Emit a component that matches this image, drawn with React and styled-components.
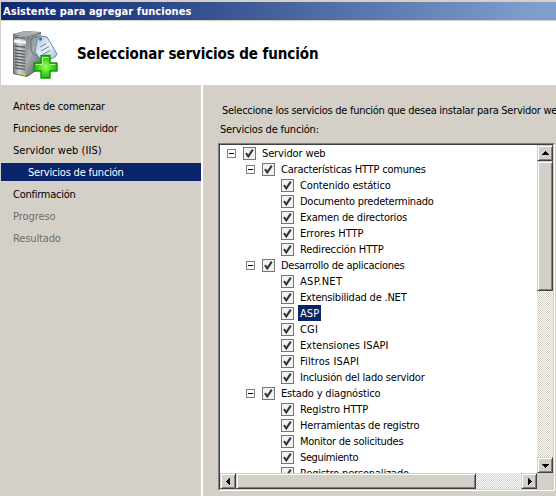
import React from "react";
import styled, { createGlobalStyle } from "styled-components";

const GlobalStyle = createGlobalStyle`
  * { box-sizing: border-box; }
  html, body { margin: 0; background: #d4d0c8; overflow: hidden; }
  body { font-family: "DejaVu Sans Condensed", "DejaVu Sans", sans-serif; font-stretch: condensed; font-size: 11px; color: #000; }
`;

const Window = styled.div`
  width: 556px;
  height: 496px;
  display: flex;
  flex-direction: column;
  overflow: hidden;
  padding: 2px 0 0 1px;
  background: #d4d0c8;
`;

const TitleBar = styled.div`
  flex: none;
  height: 18px;
  padding-left: 2px;
  line-height: 20px;
  color: #fff;
  font-weight: bold;
  white-space: nowrap;
  letter-spacing: ${(p) => p.$track}px;
  background: linear-gradient(90deg, #0c2870 0%, #3a5592 40%, #7e9ecd 96%);
`;

const Header = styled.header`
  flex: none;
  height: 64px;
  margin-top: 1px;
  display: flex;
  align-items: center;
  background: #fff;
`;

const HeaderIcon = styled.svg`
  flex: none;
  width: 48px;
  height: 50px;
  margin: 1px 17px 0 11px;
`;

const Title = styled.h1`
  margin: 2px 0 0;
  font-size: 15px;
  line-height: 20px;
  font-weight: bold;
  white-space: nowrap;
  letter-spacing: ${(p) => p.$track}px;
`;

const Body = styled.div`
  flex: 1;
  display: flex;
  min-height: 0;
`;

const Sidebar = styled.nav`
  flex: none;
  width: 202px;
  padding-top: 12px;
  border-right: 2px solid #fff;
  display: flex;
  flex-direction: column;
  gap: 4px;
`;

const Step = styled.div`
  height: 18px;
  line-height: 20px;
  white-space: nowrap;
  padding-left: ${(p) => (p.$sub ? 27 : 12)}px;
  color: ${(p) => (p.$active ? "#fff" : p.$muted ? "#706e69" : "#000")};
  background: ${(p) => (p.$active ? "#0a246a" : "transparent")};
  letter-spacing: ${(p) => p.$track}px;
`;

const Content = styled.main`
  flex: 1;
  min-width: 0;
  padding: 17px 0 0 15px;
  overflow: hidden;
`;

const Label = styled.div`
  height: 19px;
  line-height: 18px;
  white-space: nowrap;
  padding-left: ${(p) => p.$indent}px;
  letter-spacing: ${(p) => p.$track}px;
`;

const ListBox = styled.div`
  width: 337px;
  height: 348px;
  margin-top: 3px;
  border: 1px solid;
  border-color: #808080 #fff #fff #808080;
`;

const ListInner = styled.div`
  width: 335px;
  height: 346px;
  border: 1px solid;
  border-color: #404040 #d4d0c8 #d4d0c8 #404040;
  display: grid;
  grid-template: 328px 16px / 317px 16px;
  background: #d4d0c8;
`;

const Tree = styled.div`
  background: #fff;
  overflow: hidden;
`;

const Row = styled.div`
  height: 16px;
  display: flex;
  align-items: center;
  padding-left: ${(p) => 7 + p.$level * 19}px;
`;

const Toggle = styled.svg`
  flex: none;
  width: 9px;
  height: 9px;
  margin-right: 7px;
  visibility: ${(p) => (p.$shown ? "visible" : "hidden")};
`;

const Check = styled.svg`
  flex: none;
  width: 13px;
  height: 13px;
  margin-right: 4px;
`;

const RowText = styled.span`
  height: 16px;
  line-height: 18px;
  padding: 0 2px;
  white-space: nowrap;
  color: ${(p) => (p.$selected ? "#fff" : "#000")};
  background: ${(p) => (p.$selected ? "#0a246a" : "transparent")};
  letter-spacing: ${(p) => p.$track}px;
`;

const ScrollTrack = styled.div`
  display: flex;
  flex-direction: ${(p) => (p.$vertical ? "column" : "row")};
  background: repeating-conic-gradient(#fff 0 25%, #d4d0c8 0 50%) 0 0 / 2px 2px;
`;

const Raised = styled.div`
  flex: none;
  width: ${(p) => p.$w}px;
  height: ${(p) => p.$h}px;
  border: 1px solid;
  border-color: #d4d0c8 #404040 #404040 #d4d0c8;
  box-shadow: inset 1px 1px #fff, inset -1px -1px #808080;
  background: #d4d0c8;
  display: flex;
  align-items: center;
  justify-content: center;
`;

const Spacer = styled.div`
  flex: 1;
`;

const ArrowSvg = styled.svg`
  width: 7px;
  height: 7px;
`;

const arrows = {
  up: "M3 1h1v1h1v1h1v1h1v1H0V4h1V3h1V2h1z",
  down: "M0 2h7v1H6v1H5v1H4v1H3V5H2V4H1V3H0z",
  left: "M5 0v7H4V6H3V5H2V4H1V3h1V2h1V1h1V0z",
  right: "M2 0h1v1h1v1h1v1h1v1H5v1H4v1H3v1H2z",
};

const ScrollButton = ({ dir }) => (
  <Raised $w={16} $h={16}>
    <ArrowSvg viewBox="0 0 7 7" shapeRendering="crispEdges">
      <path d={arrows[dir]} />
    </ArrowSvg>
  </Raised>
);

const steps = [
  { text: "Antes de comenzar", track: -0.22 },
  { text: "Funciones de servidor", track: -0.18 },
  { text: "Servidor web (IIS)", track: 0.03 },
  { text: "Servicios de función", track: -0.2, active: true, sub: true },
  { text: "Confirmación", track: -0.25 },
  { text: "Progreso", track: -0.06, muted: true },
  { text: "Resultado", track: -0.13, muted: true },
];

const rows = [
  [0, "Servidor web", -0.13],
  [1, "Características HTTP comunes", -0.2],
  [2, "Contenido estático", -0.13],
  [2, "Documento predeterminado", -0.27],
  [2, "Examen de directorios", -0.2],
  [2, "Errores HTTP", 0],
  [2, "Redirección HTTP", -0.14],
  [1, "Desarrollo de aplicaciones", -0.25],
  [2, "ASP.NET", 0.3],
  [2, "Extensibilidad de .NET", -0.2],
  [2, "ASP", 0.1, true],
  [2, "CGI", 0.2],
  [2, "Extensiones ISAPI", 0.02],
  [2, "Filtros ISAPI", 0.12],
  [2, "Inclusión del lado servidor", -0.2],
  [1, "Estado y diagnóstico", -0.17],
  [2, "Registro HTTP", -0.06],
  [2, "Herramientas de registro", -0.19],
  [2, "Monitor de solicitudes", -0.25],
  [2, "Seguimiento", -0.38],
  [2, "Registro personalizado", -0.17],
];

const ServerIcon = () => (
  <HeaderIcon viewBox="0 0 48 50">
    <defs>
      <linearGradient id="front" x1="0" x2="1">
        <stop offset="0" stopColor="#777c7d" />
        <stop offset="0.45" stopColor="#d3d6d6" />
        <stop offset="1" stopColor="#969c9d" />
      </linearGradient>
      <linearGradient id="side" x1="0" y1="0" x2="0.6" y2="1">
        <stop offset="0" stopColor="#70787a" />
        <stop offset="0.5" stopColor="#a7afb1" />
        <stop offset="1" stopColor="#626b6d" />
      </linearGradient>
      <linearGradient id="tag" x1="0" y1="0" x2="1" y2="1">
        <stop offset="0" stopColor="#a8c2d9" />
        <stop offset="0.5" stopColor="#e8f3fb" />
        <stop offset="1" stopColor="#9db9d3" />
      </linearGradient>
      <radialGradient id="plus">
        <stop offset="0" stopColor="#9cff62" />
        <stop offset="0.6" stopColor="#43dc20" />
        <stop offset="1" stopColor="#23b512" />
      </radialGradient>
    </defs>
    <path d="M1 5L13 2 29 3 30 38 15 48 1 45z" fill="#5d6567" />
    <path d="M1 5L14 2 29 3.5 14 8z" fill="#a9b0b2" />
    <path d="M1.5 6L14 8V47L1.5 44z" fill="url(#front)" />
    <path d="M14 8L29 4.5V38L14 47z" fill="url(#side)" />
    <path d="M3 8L13 9.4M3 17L13 18.4M3 21L13 22.4M3 24L13 25.4M3 27L13 28.4M3 30L13 31.4M3 33L13 34.4M3 36L13 37.4M3 39L13 40.4" stroke="#555c5e" strokeWidth="1.4" />
    <path d="M2 12L14 13.5" stroke="#f5f7f7" strokeWidth="3" />
    <path d="M10 44.8L13 45.5" stroke="#b9e51d" strokeWidth="2" />
    <path d="M28 9C23 6 18 8 19 16C19 23 21 27 25 26" fill="none" stroke="#697b8c" strokeWidth="1.2" />
    <path d="M25 11L27 7 35 8 45 25 43 28 31 33 23 23z" fill="url(#tag)" stroke="#6f879e" strokeWidth="1" strokeLinejoin="round" />
    <circle cx="28.5" cy="10" r="1.7" fill="#526b83" />
    <path d="M28 18L34 14.5M29 22L37 17.5M31 25.5L38 21.5" stroke="#6b8196" strokeWidth="1" />
    <path d="M29 26.5H38V34H45V42H38V49H29V42H22V34H29z" fill="url(#plus)" stroke="#16920f" strokeWidth="1.4" strokeLinejoin="round" />
    <path d="M30.5 35.5V28.5H36.5M23.5 35.5H30.5M38 35.5H43.5" fill="none" stroke="#b9fb93" strokeWidth="1" />
  </HeaderIcon>
);

const TreeRow = ({ level, text, track, selected }) => (
  <Row $level={level}>
    <Toggle $shown={level < 2} viewBox="0 0 9 9" shapeRendering="crispEdges">
      <rect x="0.5" y="0.5" width="8" height="8" fill="#fff" stroke="#808080" />
      <path d="M2 4h5v1H2z" />
    </Toggle>
    <Check viewBox="0 0 13 13">
      <rect x="0.5" y="0.5" width="12" height="12" fill="#f2f2f2" stroke="#747474" />
      <path d="M3 6.2L5.3 9.4L9.8 2.6" fill="none" stroke="#343434" strokeWidth="2" />
    </Check>
    <RowText $selected={selected} $track={track}>{text}</RowText>
  </Row>
);

export default function App() {
  return (
    <>
      <GlobalStyle />
      <Window>
        <TitleBar $track={0.06}>Asistente para agregar funciones</TitleBar>
        <Header>
          <ServerIcon />
          <Title $track={-0.1}>Seleccionar servicios de función</Title>
        </Header>
        <Body>
          <Sidebar>
            {steps.map((s) => (
              <Step key={s.text} $active={s.active} $sub={s.sub} $muted={s.muted} $track={s.track}>
                {s.text}
              </Step>
            ))}
          </Sidebar>
          <Content>
            <Label $indent={4} $track={-0.27}>
              Seleccione los servicios de función que desea instalar para Servidor web (IIS):
            </Label>
            <Label $indent={2} $track={-0.2}>Servicios de función:</Label>
            <ListBox>
              <ListInner>
                <Tree>
                  {rows.map(([level, text, track, selected]) => (
                    <TreeRow key={text} level={level} text={text} track={track} selected={selected} />
                  ))}
                </Tree>
                <ScrollTrack $vertical>
                  <ScrollButton dir="up" />
                  <Raised $w={16} $h={130} />
                  <Spacer />
                  <ScrollButton dir="down" />
                </ScrollTrack>
                <ScrollTrack>
                  <ScrollButton dir="left" />
                  <Raised $w={240} $h={16} />
                  <Spacer />
                  <ScrollButton dir="right" />
                </ScrollTrack>
              </ListInner>
            </ListBox>
          </Content>
        </Body>
      </Window>
    </>
  );
}
